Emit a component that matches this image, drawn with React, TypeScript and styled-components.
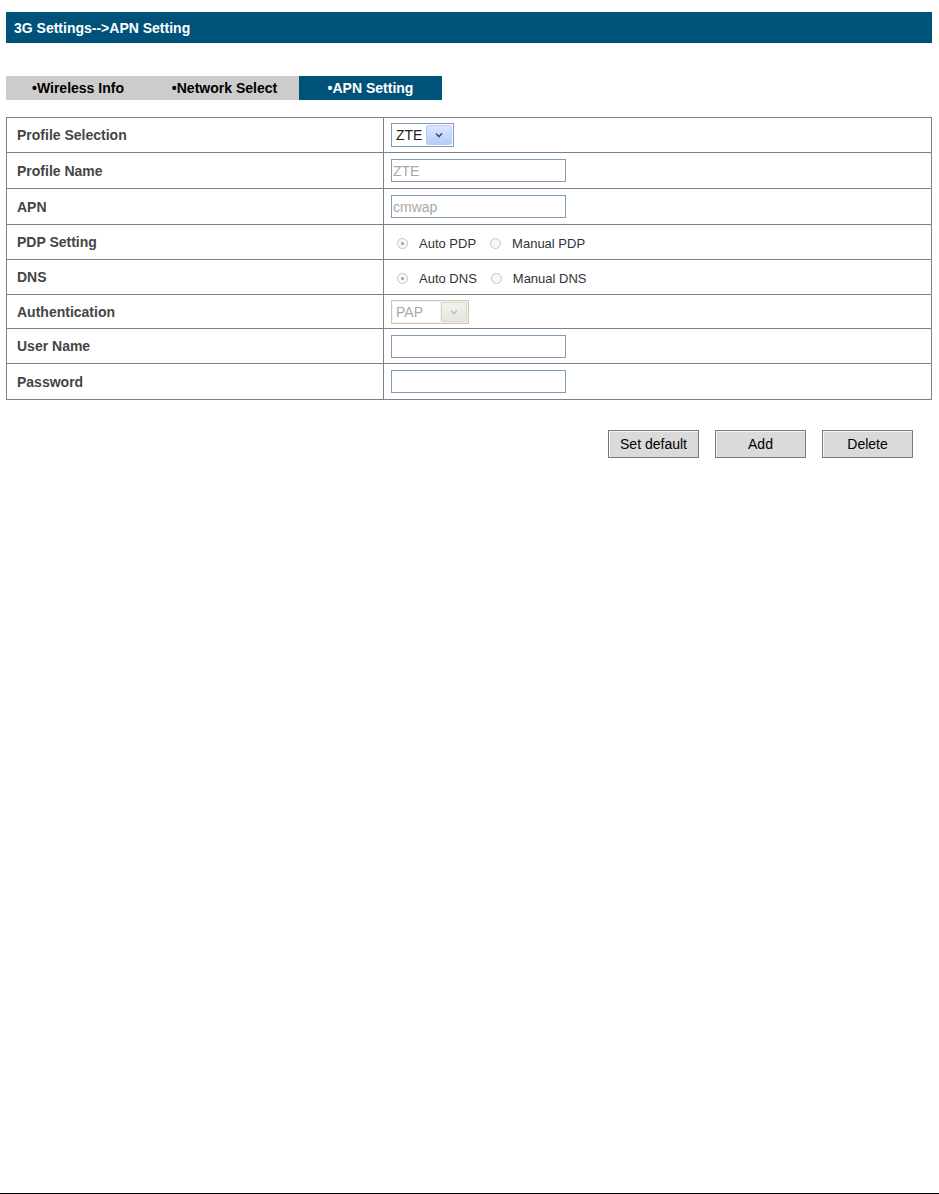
import React from "react";
import styled, { createGlobalStyle } from "styled-components";

// Global reset
const GlobalStyle = createGlobalStyle`
  html, body {
    margin: 0;
    padding: 0;
    background: #ffffff;
  }
  body {
    font-family: "Liberation Sans", Arial, sans-serif;
  }
`;

// Styled components
const Page = styled.div`
  min-height: 100vh;
  box-sizing: border-box;
  display: flex;
  flex-direction: column;
  padding: 12px 7px 0 6px;
`;

const TitleBar = styled.div`
  height: 31px;
  background: #00527a;
  color: #ffffff;
  font-size: 14px;
  font-weight: bold;
  display: flex;
  align-items: center;
  padding-left: 8px;
`;

const Tabs = styled.div`
  display: flex;
  margin-top: 33px;
  height: 24px;
`;

const Tab = styled.div<{ $active?: boolean; $width: number }>`
  width: ${(p) => p.$width}px;
  display: flex;
  align-items: center;
  justify-content: center;
  font-size: 14px;
  font-weight: bold;
  background: ${(p) => (p.$active ? "#00527a" : "#cccccc")};
  color: ${(p) => (p.$active ? "#ffffff" : "#000000")};
`;

const Table = styled.table`
  margin-top: 17px;
  width: 100%;
  border-collapse: collapse;
  border: 1px solid #808080;
`;

const Row = styled.tr<{ $h: number }>`
  height: ${(p) => p.$h}px;
`;

const Label = styled.td`
  width: 366px;
  border: 1px solid #808080;
  padding: 0 0 0 10px;
  font-size: 14px;
  font-weight: bold;
  color: #454545;
  vertical-align: middle;
`;

const Value = styled.td`
  border: 1px solid #808080;
  padding: 0 0 0 7px;
  vertical-align: middle;
`;

const TextBox = styled.div<{ $muted?: boolean }>`
  width: 172px;
  height: 21px;
  border: 1px solid #7f9db9;
  background: #fff;
  font-size: 14px;
  color: ${(p) => (p.$muted ? "#a8a8a8" : "#333")};
  display: flex;
  align-items: center;
  padding-left: 1px;
  box-sizing: content-box;
`;

const SelectBox = styled.div<{ $disabled?: boolean; $width: number }>`
  width: ${(p) => p.$width}px;
  height: 22px;
  border: 1px solid ${(p) => (p.$disabled ? "#c9c7ba" : "#7f9db9")};
  background: ${(p) => (p.$disabled ? "#f4f3ee" : "#fff")};
  display: flex;
  align-items: stretch;
  box-sizing: content-box;
`;

const SelectText = styled.span<{ $disabled?: boolean }>`
  flex: 1;
  display: flex;
  align-items: center;
  padding-left: 3px;
  font-size: 14px;
  color: ${(p) => (p.$disabled ? "#a8a8a8" : "#222")};
  background: #fff;
  margin: 1px 0 1px 1px;
`;

const SelectButton = styled.span<{ $disabled?: boolean }>`
  width: 24px;
  margin: 1px;
  border-radius: 2px;
  display: flex;
  align-items: center;
  justify-content: center;
  background: ${(p) =>
    p.$disabled
      ? "linear-gradient(#f2f1ec, #e6e5de)"
      : "linear-gradient(#dbe6fe, #b6cbfa)"};
  border: 1px solid ${(p) => (p.$disabled ? "#d8d6cb" : "#bccdf5")};
`;

const RadioGroup = styled.div`
  display: flex;
  align-items: center;
  font-size: 13px;
  color: #333;
  padding-left: 6px;
  padding-top: 3px;
`;

const RadioDot = styled.span<{ $checked?: boolean }>`
  width: 9px;
  height: 9px;
  border-radius: 50%;
  border: 1px solid #c4c4c4;
  background: #f8f8f8;
  display: inline-flex;
  align-items: center;
  justify-content: center;
  margin-right: 11px;

  &::after {
    content: "";
    width: 3px;
    height: 3px;
    border-radius: 50%;
    background: ${(p) => (p.$checked ? "#a0a0a0" : "transparent")};
  }
`;

const RadioLabel = styled.span`
  margin-right: 14px;
`;

const ButtonRow = styled.div`
  display: flex;
  justify-content: flex-end;
  gap: 16px;
  margin-top: 30px;
  padding-right: 19px;
`;

const Button = styled.button`
  width: 91px;
  height: 28px;
  font-family: "Liberation Sans", Arial, sans-serif;
  font-size: 14px;
  color: #000;
  background: #dadada;
  border: 1px solid #7a7a7a;
  box-shadow: inset 1px 1px 0 #f4f4f4;
  padding: 0;
`;

const BottomLine = styled.div`
  margin: auto -7px 0 -6px;
  height: 1px;
  background: #000;
`;

const Chevron: React.FC<{ color: string }> = ({ color }) => (
  <svg width="8" height="6" viewBox="0 0 8 6">
    <path d="M1 1.5 L4 4.5 L7 1.5" stroke={color} strokeWidth="1.6" fill="none" />
  </svg>
);

const tabs = [
  { label: "\u2022Wireless Info", width: 144 },
  { label: "\u2022Network Select", width: 149 },
  { label: "\u2022APN Setting", width: 143, active: true },
];

// Component
const App: React.FC = () => {
  return (
    <>
      <GlobalStyle />
      <Page>
        <TitleBar>3G Settings--&gt;APN Setting</TitleBar>
        <Tabs>
          {tabs.map((t) => (
            <Tab key={t.label} $width={t.width} $active={t.active}>
              {t.label}
            </Tab>
          ))}
        </Tabs>
        <Table>
          <tbody>
            <Row $h={35}>
              <Label>Profile Selection</Label>
              <Value>
                <SelectBox $width={61}>
                  <SelectText>ZTE</SelectText>
                  <SelectButton>
                    <Chevron color="#3c4d78" />
                  </SelectButton>
                </SelectBox>
              </Value>
            </Row>
            <Row $h={36}>
              <Label>Profile Name</Label>
              <Value>
                <TextBox $muted>ZTE</TextBox>
              </Value>
            </Row>
            <Row $h={36}>
              <Label>APN</Label>
              <Value>
                <TextBox $muted>cmwap</TextBox>
              </Value>
            </Row>
            <Row $h={35}>
              <Label>PDP Setting</Label>
              <Value>
                <RadioGroup>
                  <RadioDot $checked />
                  <RadioLabel>Auto PDP</RadioLabel>
                  <RadioDot />
                  <RadioLabel>Manual PDP</RadioLabel>
                </RadioGroup>
              </Value>
            </Row>
            <Row $h={35}>
              <Label>DNS</Label>
              <Value>
                <RadioGroup>
                  <RadioDot $checked />
                  <RadioLabel>Auto DNS</RadioLabel>
                  <RadioDot />
                  <RadioLabel>Manual DNS</RadioLabel>
                </RadioGroup>
              </Value>
            </Row>
            <Row $h={34}>
              <Label>Authentication</Label>
              <Value>
                <SelectBox $width={76} $disabled>
                  <SelectText $disabled>PAP</SelectText>
                  <SelectButton $disabled>
                    <Chevron color="#c0c0c0" />
                  </SelectButton>
                </SelectBox>
              </Value>
            </Row>
            <Row $h={35}>
              <Label>User Name</Label>
              <Value>
                <TextBox />
              </Value>
            </Row>
            <Row $h={36}>
              <Label>Password</Label>
              <Value>
                <TextBox />
              </Value>
            </Row>
          </tbody>
        </Table>
        <ButtonRow>
          <Button>Set default</Button>
          <Button>Add</Button>
          <Button>Delete</Button>
        </ButtonRow>
        <BottomLine />
      </Page>
    </>
  );
};

export default App;
